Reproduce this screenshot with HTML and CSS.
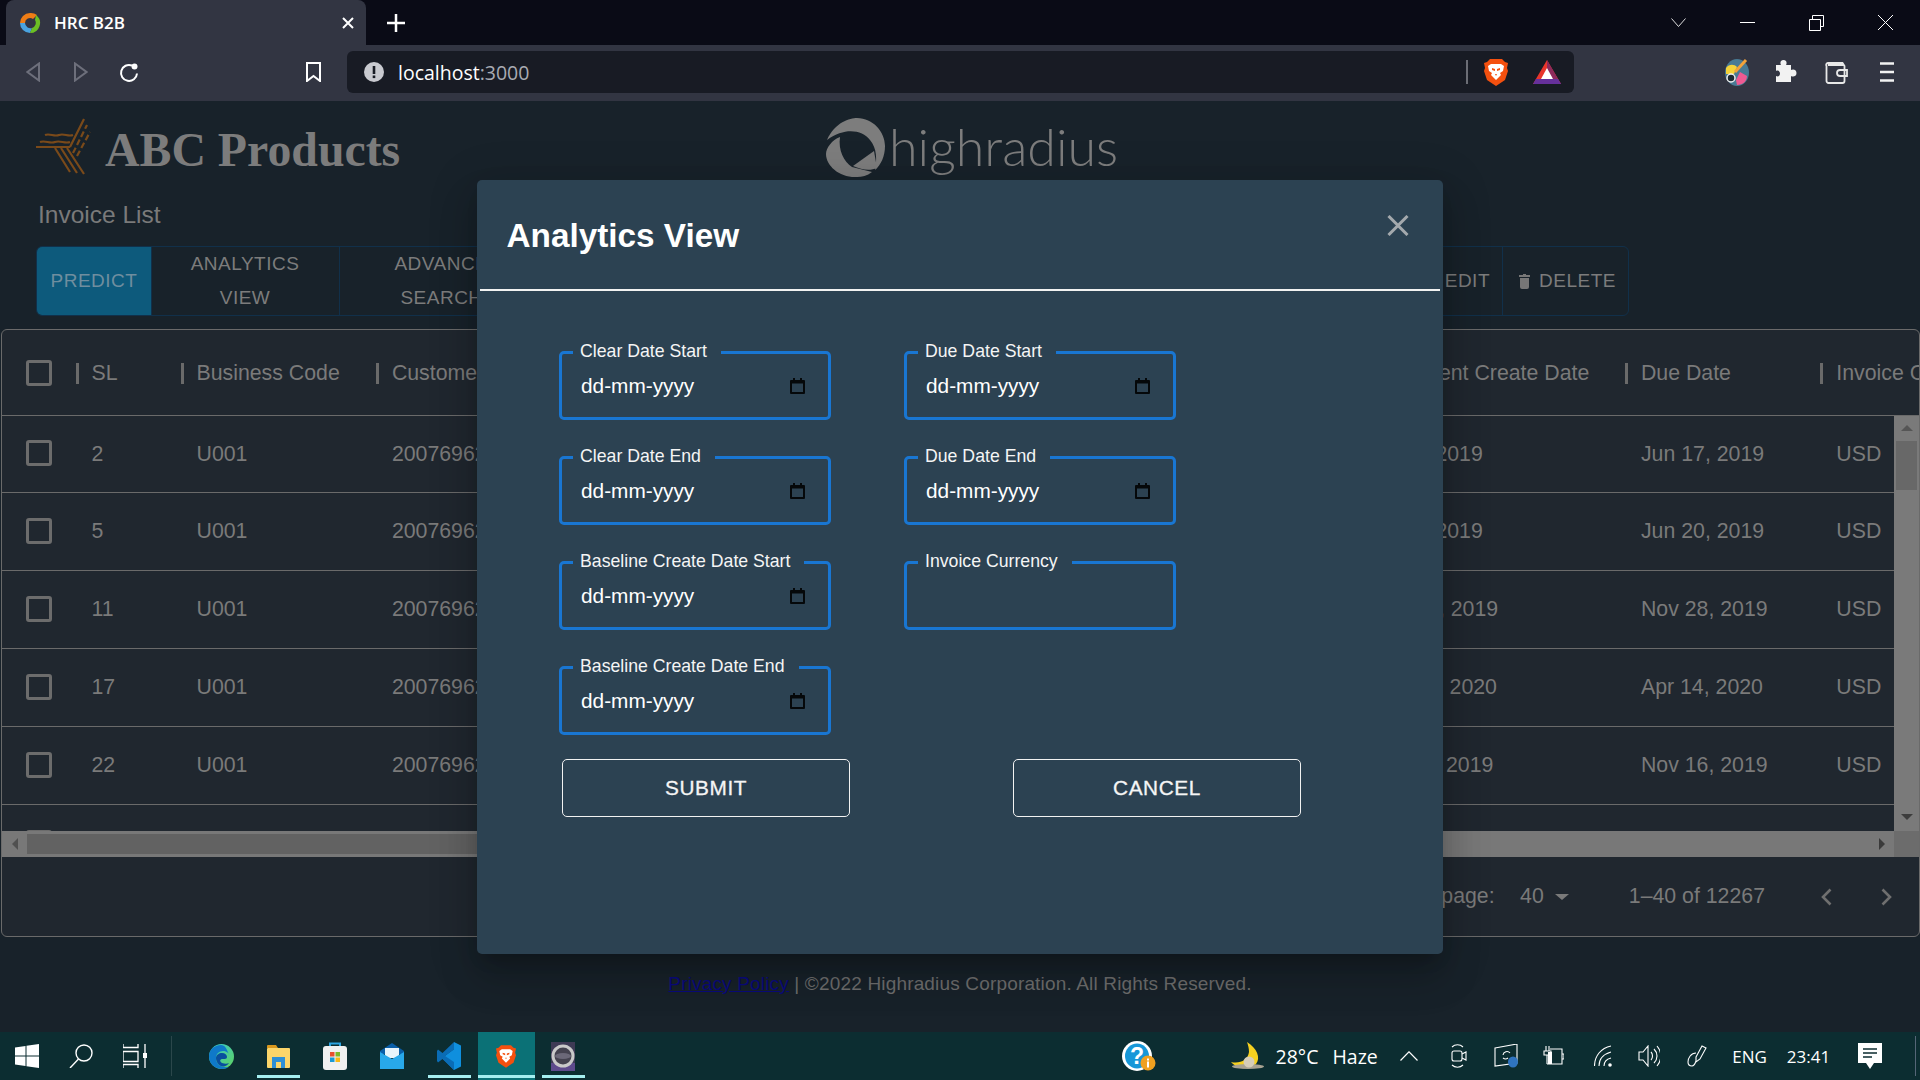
FILE: index.html
```html
<!DOCTYPE html>
<html>
<head>
    <title>HRC B2B</title>
    <link rel="stylesheet" href="styles.css">
</head>
<body>
    <svg class="defs" width="0" height="0">
        <symbol id="lion" viewBox="0 0 24 28">
            <path d="M6 1h12l3 3 3 1-1 5 1 3-3 9-9 6-9-6-3-9 1-3-1-5 3-1z" fill="#f4500f"/>
            <path d="M7 6h10l3 2-1 5-3 2 1 2-5 5-5-5 1-2-3-2-1-5z" fill="#fff"/>
            <path d="M8 10l3 1v2l-3-1zM16 10l-3 1v2l3-1zM11 16h2l-1 2z" fill="#f4500f"/>
        </symbol>
        <symbol id="calendar" viewBox="0 0 15 16">
            <path d="M3 0h2v2h5V0h2v2h2a1 1 0 0 1 1 1v12a1 1 0 0 1-1 1H1a1 1 0 0 1-1-1V3a1 1 0 0 1 1-1h2z" fill="#05080a"/>
            <rect x="2" y="5.500" width="11" height="8.500" fill="#2c4252"/>
        </symbol>
    </svg>

    <div class="tab-strip">
        <div class="tab">
            <svg class="favicon" viewBox="0 0 22 22">
                <path d="M11 1a10 10 0 0 0-10 10h5a5 5 0 0 1 8-4l4-4a10 10 0 0 0-7-2z" fill="#ef7d16"/>
                <path d="M1 11a10 10 0 0 0 10 10l2-5a5.500 5.500 0 0 1-7-5z" fill="#4aa3df"/>
                <path d="M17 3a10 10 0 0 1-6 18l2-5a5.500 5.500 0 0 0 3-8z" fill="#6cc024"/>
            </svg>
            <span class="tab-title">HRC B2B</span>
            <svg class="tab-close" viewBox="0 0 12 12"><path d="M1 1l10 10M11 1L1 11" stroke="#fff" stroke-width="2"/></svg>
        </div>
        <svg class="new-tab" viewBox="0 0 18 18"><path d="M9 0v18M0 9h18" stroke="#fff" stroke-width="2.500"/></svg>
        <div class="win-controls">
            <svg width="15" height="9" viewBox="0 0 15 9"><path d="M.5.500l7 8 7-8" fill="none" stroke="#ddd"/></svg>
            <svg width="15" height="1" viewBox="0 0 15 1"><path d="M0 .5h15" stroke="#fff"/></svg>
            <svg width="15" height="16" viewBox="0 0 15 16"><path d="M.5 4.500h11v11H.5zM3.500 4V.5h11v11H12" fill="none" stroke="#fff"/></svg>
            <svg width="15" height="15" viewBox="0 0 15 15"><path d="M0 0l15 15M15 0L0 15" stroke="#fff"/></svg>
        </div>
    </div>

    <div class="toolbar">
        <svg class="nav-back" width="14" height="20" viewBox="0 0 14 20"><path d="M13 1.500v17L1.500 10z" fill="none" stroke="#6d6f7b" stroke-width="2"/></svg>
        <svg class="nav-forward" width="14" height="20" viewBox="0 0 14 20"><path d="M1 1.500v17L12.500 10z" fill="none" stroke="#6d6f7b" stroke-width="2"/></svg>
        <svg class="nav-reload" width="21" height="21" viewBox="0 0 21 21"><path d="M14 3.500a8 8 0 1 0 5 8" fill="none" stroke="#fff" stroke-width="2"/><circle cx="16.500" cy="4.500" r="3" fill="#fff"/></svg>
        <svg class="nav-mark" width="15" height="20" viewBox="0 0 15 20"><path d="M1 1h13v18l-6.500-5L1 19z" fill="none" stroke="#fff" stroke-width="2"/></svg>
        <div class="address-bar">
            <svg width="20" height="20" viewBox="0 0 20 20"><circle cx="10" cy="10" r="10" fill="#c9cad0"/><rect x="8.700" y="4" width="2.600" height="8" fill="#181b24"/><rect x="8.700" y="13.500" width="2.600" height="2.600" fill="#181b24"/></svg>
            <span class="url"><b>localhost</b>:3000</span>
            <i class="address-sep"></i>
            <svg class="shield" width="24" height="28"><use href="#lion"/></svg>
            <svg class="bat" width="28" height="24" viewBox="0 0 28 24">
                <path d="M14 0L0 24h28z" fill="#e8352c"/>
                <path d="M14 0l14 24H14z" fill="#8d2a5c"/>
                <path d="M0 24l3-5h22l3 5z" fill="#66309b"/>
                <path d="M14 8l6 11H8z" fill="#fff"/>
            </svg>
        </div>
        <svg class="ext-paint" width="24" height="28" viewBox="0 0 24 28">
            <ellipse cx="12" cy="14.500" rx="12" ry="13.500" fill="#487a94"/>
            <path d="M1 10c3-4 8-4 11-1l-3 7-8 0z" fill="#f5d33a"/>
            <path d="M12 27c6 0 10-4 10-9l-7-4-4 8z" fill="#ef5a92"/>
            <path d="M10 14L21 2" stroke="#f2a33a" stroke-width="3"/>
            <circle cx="6" cy="20" r="4" fill="#1d2a33" stroke="#eee" stroke-width="1.500"/>
        </svg>
        <svg class="ext-puzzle" width="22" height="26" viewBox="0 0 22 26"><path d="M1 6h5c-1-1.500-1-5 2.500-5s3.500 3.500 2.500 5h5v5c1.500-1 5.500-1 5.500 3s-4 4-5.500 3v6H1v-6c2 1 4 0 4-2.500S3 11 1 12z" fill="#f2f2f2"/></svg>
        <svg class="ext-wallet" width="23" height="23" viewBox="0 0 23 23"><path d="M3 4h16M1.500 5a2 2 0 0 1 2-3h14l2 3v15a2 2 0 0 1-2 2h-14a2 2 0 0 1-2-2zM22 9h-7a3 3 0 0 0 0 6h7z" fill="none" stroke="#e8e8e8" stroke-width="1.800"/></svg>
        <svg class="ext-menu" width="14" height="20" viewBox="0 0 14 20"><path d="M0 1.500h14M0 10h14M0 18.500h14" stroke="#f2f2f2" stroke-width="2.500"/></svg>
    </div>

    <div class="page">
        <header class="brand-row">
            <div class="brand-abc">
                <svg width="80" height="70" viewBox="0 0 80 70" fill="none" stroke="#7a4a1a" stroke-width="2.200">
                    <path d="M11 37h34M45 37L59 9"/>
                    <path d="M20 25c5-2 9 2 14 0s9 2 14 0M15 32c5-2 10 2 15 0s10 2 15 0"/>
                    <path d="M48 43l14-28M52 46l13-24" stroke-dasharray="6 3"/>
                    <path d="M30 38l15 24M36 38l16 25M42 38l17 26"/>
                </svg>
                <span class="abc-name">ABC Products</span>
            </div>
            <div class="brand-hrc">
                <svg width="68" height="70" viewBox="11 0 68 70" fill="#7d7d7d">
                    <path d="M12 30C20 12 35 8 42 8c16 0 28 14 28 28 0 10-4 19-10 24 2-10 2-22-5-30C47 20 30 17 12 30z"/>
                    <path d="M25 27c-8 3-14 11-14 17 0 12 14 24 31 23 5 0 10-1 15-5l-20-5c-8-5-14-17-12-30z"/>
                    <path d="M59 41l3 17c-7 3-15 2-24-2z"/>
                </svg>
                <span class="hrc-name">highradius</span>
            </div>
        </header>

        <h2 class="list-title">Invoice List</h2>

        <div class="btn-group">
            <div class="group-item predict">PREDICT</div>
            <div class="group-item analytics">ANALYTICS VIEW</div>
            <div class="group-item advanced"><span>ADVANCED <span class="search-word">SEARCH</span></span></div>
            <div class="group-item add">ADD</div>
            <div class="group-item edit">EDIT</div>
            <div class="group-item delete">
                <svg width="11" height="15" viewBox="0 0 11 15"><path d="M4 0h3v1h4v2H0V1h4zM1 4h9v9a2 2 0 0 1-2 2H3a2 2 0 0 1-2-2z" fill="#777"/></svg>
                <span>DELETE</span>
            </div>
        </div>

        <div class="table-card">
            <div class="table-wrap">
                <table class="invoices">
                    <colgroup>
                        <col class="c-check"><col class="c-sl"><col class="c-std"><col class="c-std">
                        <col class="c-std"><col class="c-std"><col class="c-std"><col class="c-post">
                        <col class="c-wide"><col class="c-std"><col class="c-last">
                    </colgroup>
                    <thead>
                        <tr>
                            <th><i class="check"></i></th>
                            <th><div class="th-in"><i class="sep"></i>SL</div></th>
                            <th><div class="th-in"><i class="sep"></i>Business Code</div></th>
                            <th><div class="th-in"><i class="sep"></i>Customer Number</div></th>
                            <th><div class="th-in"><i class="sep"></i>Clear Date</div></th>
                            <th><div class="th-in"><i class="sep"></i>Business Year</div></th>
                            <th><div class="th-in"><i class="sep"></i>Document Id</div></th>
                            <th><div class="th-in"><i class="sep"></i>Posting Date</div></th>
                            <th><div class="th-in"><i class="sep"></i>Document Create Date</div></th>
                            <th><div class="th-in"><i class="sep"></i>Due Date</div></th>
                            <th><div class="th-in"><i class="sep"></i>Invoice Currency</div></th>
                        </tr>
                    </thead>
                    <tbody>
                        <tr><td><i class="check"></i></td><td>2</td><td>U001</td><td>200769623</td><td></td><td></td><td></td><td></td><td>Jun 3, 2019</td><td>Jun 17, 2019</td><td>USD</td></tr>
                        <tr><td><i class="check"></i></td><td>5</td><td>U001</td><td>200769623</td><td></td><td></td><td></td><td></td><td>Jun 6, 2019</td><td>Jun 20, 2019</td><td>USD</td></tr>
                        <tr><td><i class="check"></i></td><td>11</td><td>U001</td><td>200769623</td><td></td><td></td><td></td><td></td><td>Nov 13, 2019</td><td>Nov 28, 2019</td><td>USD</td></tr>
                        <tr><td><i class="check"></i></td><td>17</td><td>U001</td><td>200769623</td><td></td><td></td><td></td><td></td><td>Mar 30, 2020</td><td>Apr 14, 2020</td><td>USD</td></tr>
                        <tr><td><i class="check"></i></td><td>22</td><td>U001</td><td>200769623</td><td></td><td></td><td></td><td></td><td>Oct 31, 2019</td><td>Nov 16, 2019</td><td>USD</td></tr>
                        <tr><td><i class="check"></i></td><td></td><td></td><td></td><td></td><td></td><td></td><td></td><td></td><td></td><td></td></tr>
                    </tbody>
                </table>
                <div class="vbar">
                    <i class="arrow-up"></i>
                    <div class="vthumb"></div>
                    <i class="arrow-down"></i>
                </div>
            </div>
            <div class="hbar">
                <div class="hbtn"><i class="arrow-left"></i></div>
                <div class="hthumb"></div>
                <div class="hbtn hbtn-right"><i class="arrow-right"></i></div>
                <div class="hcorner"></div>
            </div>
            <div class="pager">
                <span>Rows per page:</span>
                <span class="per-page">40</span>
                <i class="caret"></i>
                <span class="range">1–40 of 12267</span>
                <svg class="prev" width="12" height="18" viewBox="0 0 12 18"><path d="M10.500 1.500L3 9l7.500 7.500" fill="none" stroke="#6f6f6f" stroke-width="2.600"/></svg>
                <svg class="next" width="12" height="18" viewBox="0 0 12 18"><path d="M1.500 1.500L9 9l-7.500 7.500" fill="none" stroke="#6f6f6f" stroke-width="2.600"/></svg>
            </div>
        </div>

        <footer class="page-footer"><a href="#">Privacy Policy</a> | ©2022 Highradius Corporation. All Rights Reserved.</footer>
    </div>

    <div class="taskbar">
        <div class="tb-sys">
            <svg width="24" height="24" viewBox="0 0 24 24" fill="#fff"><path d="M0 3.500l10.500-1.500v9.500H0zM11.500 1.800L24 0v11.500H11.500zM0 12.500h10.500V22L0 20.500zM11.500 12.500H24V24l-12.500-1.800z"/></svg>
        </div>
        <div class="tb-sys">
            <svg width="24" height="24" viewBox="0 0 24 24" fill="none" stroke="#fff" stroke-width="1.400"><circle cx="15" cy="9" r="8"/><path d="M9.500 15L1 24"/></svg>
        </div>
        <div class="tb-sys">
            <svg width="24" height="24" viewBox="0 0 24 24" fill="none" stroke="#fff" stroke-width="1.300"><path d="M0 3.500h15V0M0 3.500V0M0 7.500h15v10H0zM0 24v-3.500h15V24M22 0v24"/><rect x="20" y="9" width="4" height="5" fill="#fff" stroke="none"/></svg>
        </div>
        <div class="tb-divider"></div>
        <div class="tb-app">
            <svg width="25" height="25" viewBox="0 0 25 25">
                <defs><linearGradient id="edgeg" x1="0" y1="0" x2="1" y2="1"><stop offset="0" stop-color="#37c6d0"/><stop offset="1" stop-color="#5fd35f"/></linearGradient></defs>
                <circle cx="12.500" cy="12.500" r="12.500" fill="url(#edgeg)"/>
                <path d="M12 1C5 1 0 6 0 12.500 0 20 6 25 13 25c3 0 5-1 7-2-7 1-13-2-13-9 0-4 3-7 7-7 3 0 6 2 6 4-2-6-4-10-8-10z" fill="#0f79c9"/>
                <path d="M7 14c0-3 3-5 6-5s5 2 5 4c0 2-2 2-4 2-3 0-4 2-1 4 3 1 5 1 7 0-2 3-5 4-8 3-3-1-5-5-5-8z" fill="#094f9e"/>
            </svg>
        </div>
        <div class="tb-app running">
            <svg width="23" height="24" viewBox="0 0 23 24">
                <path d="M0 2a1 1 0 0 1 1-1h8l2 3h-11z" fill="#d9981e"/>
                <rect y="4" width="23" height="20" rx="1" fill="#fbd56a"/>
                <path d="M5 13h13v11h-4v-6H9v6H5z" fill="#2d8fd6"/>
            </svg>
        </div>
        <div class="tb-app">
            <svg width="24" height="28" viewBox="0 0 24 28">
                <path d="M7 6V1.500h10V6" fill="none" stroke="#2ca4e0" stroke-width="2"/>
                <rect y="4" width="24" height="24" rx="3" fill="#f1f1f1"/>
                <rect x="7" y="10" width="4.500" height="4.500" fill="#e8502e"/><rect x="12.500" y="10" width="4.500" height="4.500" fill="#7db928"/>
                <rect x="7" y="15.500" width="4.500" height="4.500" fill="#1a9ad6"/><rect x="12.500" y="15.500" width="4.500" height="4.500" fill="#f9b916"/>
            </svg>
        </div>
        <div class="tb-app">
            <svg width="24" height="26" viewBox="0 0 24 26">
                <path d="M12 0l12 8v3H0V8z" fill="#0a5ea8"/>
                <path d="M5 5h14v10H5z" fill="#e8f4fb"/>
                <path d="M0 9l12 7 12-7v17H0z" fill="#28a8ea"/>
            </svg>
        </div>
        <div class="tb-app running">
            <svg width="24" height="28" viewBox="0 0 24 28">
                <path d="M17 0l7 3.500v21L17 28 5 16l12-9z" fill="#0f8fde"/>
                <path d="M17 0L5.500 11 1 7.500 0 9v10l1 1.500L5.500 17 17 28V20L8 14l9-6.500z" fill="#0a6cb5"/>
            </svg>
        </div>
        <div class="tb-app active running">
            <svg width="20" height="24"><use href="#lion"/></svg>
        </div>
        <div class="tb-app running">
            <svg width="24" height="29" viewBox="0 0 24 29">
                <rect width="24" height="29" fill="#3e3a55"/>
                <rect y="21" width="24" height="8" fill="#5e4a8c"/>
                <circle cx="12" cy="14" r="11.500" fill="#c9c9c9"/>
                <circle cx="12" cy="14" r="8.500" fill="#44424f"/>
                <ellipse cx="12" cy="14" rx="8" ry="3" fill="#6b6878"/>
            </svg>
        </div>

        <svg class="tray-help" width="35" height="30" viewBox="0 0 35 30">
            <ellipse cx="16" cy="15" rx="15" ry="15" fill="#fff"/>
            <ellipse cx="16" cy="15" rx="12" ry="12.500" fill="#1697d8"/>
            <text x="16" y="23" text-anchor="middle" class="help-mark">?</text>
            <circle cx="27" cy="22" r="7.500" fill="#f0a020"/>
            <rect x="26" y="20.500" width="2" height="6" fill="#fff"/><rect x="26" y="17.500" width="2" height="2" fill="#fff"/>
        </svg>
        <svg class="tray-moon" width="34" height="28" viewBox="0 0 34 28">
            <path d="M17 0c10 6 14 16 9 22S8 28 1 20c9 2 17-2 18-10 0-4-1-7-2-10z" fill="#f5d020"/>
            <ellipse cx="18" cy="24.500" rx="16" ry="2.500" fill="#a8a292"/>
            <circle cx="19" cy="20" r="5.500" fill="#d6cdb8"/>
        </svg>
        <span class="tray-temp">28°C</span>
        <span class="tray-haze">Haze</span>
        <svg class="tray-up" width="18" height="10" viewBox="0 0 18 10"><path d="M.5 9.500L9 .8l8.500 8.700" fill="none" stroke="#fff" stroke-width="1.200"/></svg>
        <svg class="tray-meet" width="17" height="24" viewBox="0 0 17 24" fill="none" stroke="#fff" stroke-width="1.100"><path d="M2 3c3-3 8-3 11 0M2 21c3 3 8 3 11 0"/><rect x="2" y="7" width="10" height="10" rx="2"/><path d="M12 10l4-2v8l-4-2"/></svg>
        <svg class="tray-sync" width="24" height="24" viewBox="0 0 24 24" fill="none" stroke="#fff" stroke-width="1.100">
            <path d="M1 4L23 0v19L1 22zM9 11a4 4 0 0 1 7-2M14 14a4 4 0 0 1-5 0"/>
            <ellipse cx="19" cy="18" rx="5" ry="5.500" fill="#2f74c0" stroke="none"/>
        </svg>
        <svg class="tray-battery" width="23" height="20" viewBox="0 0 23 20" fill="none" stroke="#fff" stroke-width="1.100"><path d="M5 0v5M8 0v5M3 5h7v4H3zM6 9v9"/><path d="M9 3h12v15H6"/><path d="M21 8h2v5h-2"/><rect x="7" y="6" width="4" height="12" fill="#fff" stroke="none"/></svg>
        <svg class="tray-wifi" width="18" height="22" viewBox="0 0 18 22" fill="none" stroke="#fff" stroke-width="1.100"><path d="M.5 21C.5 11 7 3 17 1M5 21c0-7 5-12 12-14M10 21c0-4 3-7 7-8"/><circle cx="16" cy="20" r="1.800" fill="#fff" stroke="none"/></svg>
        <svg class="tray-volume" width="22" height="22" viewBox="0 0 22 22" fill="none" stroke="#fff" stroke-width="1.100"><path d="M1 7h4l5-6v20l-5-6H1zM13 7c2 2 2 6 0 8M16 4c4 4 4 10 0 14M19 1c5 6 5 14 0 20"/></svg>
        <svg class="tray-pen" width="20" height="22" viewBox="0 0 20 22" fill="none" stroke="#fff" stroke-width="1.100"><path d="M9 12L15 1l4 2-6 11-4 3zM9 8C4 8 1 13 1 17c0 3 2 4 4 4s3-2 4-5"/></svg>
        <span class="tray-lang">ENG</span>
        <span class="tray-clock">23:41</span>
        <svg class="tray-notify" width="24" height="26" viewBox="0 0 24 26"><path d="M0 0h24v20h-8l-4 6-4-6H0z" fill="#fff"/><path d="M5 6h14M5 10h14M5 14h9" stroke="#0c2d31" stroke-width="1.300"/></svg>
        <i class="tray-edge"></i>
    </div>

    <div class="dialog">
        <div class="dialog-head">
            <h1>Analytics View</h1>
            <svg width="22" height="21" viewBox="0 0 22 21"><path d="M1.500 1L20.500 20M20.500 1L1.500 20" stroke="#a4a9ad" stroke-width="3"/></svg>
        </div>
        <div class="dialog-body">
            <div class="field-grid">
                <fieldset class="field"><legend>Clear Date Start</legend><div class="field-value">dd-mm-yyyy<svg width="15" height="16"><use href="#calendar"/></svg></div></fieldset>
                <fieldset class="field"><legend>Due Date Start</legend><div class="field-value">dd-mm-yyyy<svg width="15" height="16"><use href="#calendar"/></svg></div></fieldset>
                <fieldset class="field"><legend>Clear Date End</legend><div class="field-value">dd-mm-yyyy<svg width="15" height="16"><use href="#calendar"/></svg></div></fieldset>
                <fieldset class="field"><legend>Due Date End</legend><div class="field-value">dd-mm-yyyy<svg width="15" height="16"><use href="#calendar"/></svg></div></fieldset>
                <fieldset class="field"><legend>Baseline Create Date Start</legend><div class="field-value">dd-mm-yyyy<svg width="15" height="16"><use href="#calendar"/></svg></div></fieldset>
                <fieldset class="field"><legend>Invoice Currency</legend><div class="field-value"></div></fieldset>
                <fieldset class="field"><legend>Baseline Create Date End</legend><div class="field-value">dd-mm-yyyy<svg width="15" height="16"><use href="#calendar"/></svg></div></fieldset>
            </div>
            <div class="dialog-actions">
                <button>SUBMIT</button>
                <button>CANCEL</button>
            </div>
        </div>
    </div>
</body>
</html>
```

FILE: styles.css
```css
* { box-sizing: border-box; }
html, body { margin: 0; height: 100%; }
body {
    width: 1920px;
    height: 1080px;
    overflow: hidden;
    position: relative;
    display: flex;
    flex-direction: column;
    font-family: "Liberation Sans", Arial, sans-serif;
    background: #18222a;
}
.defs { position: absolute; }

/* browser chrome */
.tab-strip {
    height: 45px;
    flex: none;
    display: flex;
    align-items: center;
    background: #0a0b16;
    padding-left: 6px;
}
.tab {
    width: 360px;
    height: 45px;
    display: flex;
    align-items: center;
    background: #323542;
    border-radius: 8px 8px 0 0;
    padding-left: 13px;
}
.favicon { width: 22px; height: 22px; }
.tab-title {
    font-family: "Open Sans", sans-serif;
    font-weight: 600;
    font-size: 17px;
    color: #fff;
    margin-left: 13px;
}
.tab-close { width: 12px; height: 12px; margin-left: auto; margin-right: 12px; }
.new-tab { width: 18px; height: 18px; margin-left: 21px; }
.win-controls {
    margin-left: auto;
    display: flex;
    align-items: center;
    padding-right: 27px;
    gap: 54px;
}
.toolbar {
    height: 56px;
    flex: none;
    display: flex;
    align-items: center;
    background: #323542;
    padding-bottom: 2px;
}
.nav-back { margin-left: 26px; }
.nav-forward { margin-left: 34px; }
.nav-reload { margin-left: 30px; }
.nav-mark { margin-left: 167px; }
.address-bar {
    width: 1227px;
    height: 42px;
    margin-left: 26px;
    display: flex;
    align-items: center;
    background: #181b24;
    border-radius: 6px;
    padding-left: 17px;
}
.url {
    font-family: "Open Sans", sans-serif;
    font-size: 19.500px;
    color: #a9abb3;
    margin-left: 14px;
}
.url b { font-weight: 400; color: #fff; }
.address-sep { width: 2px; height: 24px; background: #6b6d75; margin-left: 937px; }
.shield { margin-left: 16px; }
.bat { margin-left: 25px; }
.ext-paint { margin-left: 151px; }
.ext-puzzle { margin-left: 26px; }
.ext-wallet { margin-left: 28px; }
.ext-menu { margin-left: 32px; }

/* page behind the dialog */
.page {
    height: 931px;
    flex: none;
    overflow: hidden;
}
.brand-row {
    height: 94px;
    display: flex;
    align-items: flex-start;
}
.brand-abc {
    width: 822px;
    padding: 9px 0 0 25px;
    display: flex;
    align-items: flex-start;
}
.abc-name {
    font-family: "Liberation Serif", serif;
    font-weight: bold;
    font-size: 47.800px;
    line-height: 62px;
    color: #7c7c7c;
    padding-top: 9px;
}
.brand-hrc {
    padding-top: 9px;
    margin-left: 4px;
    display: flex;
    align-items: flex-start;
}
.hrc-name {
    font-family: Lato, sans-serif;
    font-weight: 300;
    font-size: 52px;
    line-height: 62px;
    color: #7d7d7d;
    margin-left: -5px;
    padding-top: 5px;
}
.list-title {
    margin: 0 0 11px 38px;
    font-weight: normal;
    font-size: 24.500px;
    line-height: 40px;
    color: #7a7a7a;
}
.btn-group {
    margin-left: 36px;
    width: 1593px;
    height: 70px;
    display: flex;
    border: 1px solid #11304a;
    border-radius: 6px;
}
.group-item {
    display: flex;
    align-items: center;
    justify-content: center;
    text-align: center;
    font-size: 19px;
    line-height: 33.250px;
    letter-spacing: 0.5px;
    color: #7c7c7c;
    border-right: 1px solid #11304a;
}
.predict { width: 115px; background: #0d5a7c; color: #6f8e9f; border-radius: 5px 0 0 5px; }
.analytics { width: 188px; padding: 0 31px 1px 30px; }
.advanced { width: 218px; padding: 0 40px 1px; }
.search-word { display: inline-block; margin-right: 14px; }
.add { flex: 1; }
.edit { width: 101px; justify-content: flex-end; padding-right: 12px; }
.delete { width: 125px; border-right: 0; justify-content: flex-start; padding-left: 16px; gap: 9px; }

/* table */
.table-card {
    margin: 13px 0 0 1px;
    width: 1919px;
    height: 608px;
    display: flex;
    flex-direction: column;
    background: #20272f;
    border: 1px solid #6a6a6a;
    border-radius: 6px;
    overflow: hidden;
}
.table-wrap {
    position: relative;
    height: 501px;
    flex: none;
    overflow: hidden;
}
.invoices {
    table-layout: fixed;
    width: 2018px;
    border-collapse: separate;
    border-spacing: 0;
    font-size: 21.300px;
    color: #7a7a7a;
}
.c-check { width: 73.500px; }
.c-sl { width: 105px; }
.c-std { width: 195.400px; }
.c-post { width: 198px; }
.c-wide { width: 269.500px; }
.c-last { width: 200px; }
.invoices th {
    height: 86px;
    padding: 0;
    font-weight: normal;
    text-align: left;
    white-space: nowrap;
    overflow: hidden;
    border-bottom: 1px solid #6a6a6a;
}
.th-in { display: flex; align-items: center; padding-top: 2px; }
.sep { width: 3px; height: 21px; background: #6a6a6a; margin-right: 13px; flex: none; }
.invoices td {
    height: 78px;
    padding: 0 0 0 16px;
    white-space: nowrap;
    overflow: hidden;
    border-bottom: 1px solid #6a6a6a;
}
.invoices tbody tr:first-child td { height: 77px; }
.invoices td:first-child { padding: 0 0 2px; }
.check {
    display: block;
    width: 26px;
    height: 26px;
    margin-left: 24px;
    border: 3px solid #6c6c6c;
    border-radius: 3px;
}
.vbar {
    position: absolute;
    top: 86px;
    right: 0;
    bottom: 0;
    width: 25px;
    background: #7a7a7a;
    display: flex;
    flex-direction: column;
    align-items: center;
}
.arrow-up {
    margin-top: 9px;
    border: 6px solid transparent;
    border-top: 0;
    border-bottom: 6px solid #565656;
}
.vthumb { width: 21px; height: 49px; margin-top: 10px; background: #686868; }
.arrow-down {
    margin-top: auto;
    margin-bottom: 11px;
    border: 6px solid transparent;
    border-bottom: 0;
    border-top: 6px solid #3d3d3d;
}
.hbar {
    height: 26px;
    flex: none;
    display: flex;
    background: #787878;
}
.hbtn {
    width: 25px;
    flex: none;
    display: flex;
    align-items: center;
    justify-content: center;
}
.hbtn-right { margin-left: auto; }
.hthumb { width: 1380px; margin: 3px 0; background: #626262; }
.hcorner { width: 25px; background: #6c6c6c; }
.arrow-left { border: 6px solid transparent; border-left: 0; border-right: 6px solid #505050; }
.arrow-right { border: 6px solid transparent; border-right: 0; border-left: 6px solid #3a3a3a; margin-left: 1px; }
.pager {
    height: 79px;
    flex: none;
    display: flex;
    align-items: center;
    justify-content: flex-end;
    font-size: 21.300px;
    color: #7a7a7a;
    padding-right: 26px;
    white-space: nowrap;
}
.per-page { margin-left: 25.500px; }
.caret {
    margin-left: 11px;
    border: 7px solid transparent;
    border-bottom: 0;
    border-top: 6px solid #7a7a7a;
}
.range { margin-left: 60px; }
.prev { margin-left: 55px; }
.next { margin-left: 49px; }
.page-footer {
    margin-top: 36px;
    text-align: center;
    font-size: 19px;
    line-height: 22px;
    letter-spacing: 0.165px;
    color: #6f6f6f;
}
.page-footer a { color: #0a0a7e; }

/* taskbar */
.taskbar {
    height: 48px;
    flex: none;
    display: flex;
    align-items: center;
    background: #0c2d31;
    color: #fff;
    font-family: "Open Sans", sans-serif;
}
.tb-sys {
    width: 54px;
    height: 48px;
    display: flex;
    align-items: center;
    justify-content: center;
}
.tb-divider {
    width: 30.500px;
    height: 40px;
    margin-left: 9px;
    margin-right: -9px;
    border-left: 1px solid #2b474b;
}
.tb-app {
    width: 57px;
    height: 48px;
    display: flex;
    align-items: center;
    justify-content: center;
}
.tb-app.running { background: linear-gradient(#a5eef0, #a5eef0) center bottom 2px / 43px 3px no-repeat; }
.tb-app.active.running { background: linear-gradient(#a5eef0, #a5eef0) center bottom 2px / 100% 3px no-repeat, #0b7176; }
.help-mark { font-family: "Liberation Sans", sans-serif; font-weight: bold; font-size: 23px; fill: #fff; }
.tray-help { margin-left: 529px; }
.tray-moon { margin-left: 74px; }
.tray-temp { margin-left: 12px; font-size: 19.500px; }
.tray-haze { margin-left: 14px; font-size: 19.500px; }
.tray-up { margin-left: 22px; }
.tray-meet { margin-left: 32.500px; }
.tray-sync { margin-left: 27px; }
.tray-battery { margin-left: 23px; }
.tray-wifi { margin-left: 30px; }
.tray-volume { margin-left: 26px; }
.tray-pen { margin-left: 27px; }
.tray-lang { margin-left: 25px; font-size: 17px; }
.tray-clock { margin-left: 20px; font-size: 17px; }
.tray-notify { margin-left: 28px; }
.tray-edge { width: 1px; height: 40px; background: #567; margin-left: 33px; }

/* dialog */
.dialog {
    position: absolute;
    left: 477px;
    top: 180px;
    width: 966px;
    height: 774px;
    background: #2c4252;
    border-radius: 5px;
    box-shadow: 0 11px 15px -7px rgba(0,0,0,0.2), 0 24px 38px 3px rgba(0,0,0,0.14), 0 9px 46px 8px rgba(0,0,0,0.12);
    color: #fff;
}
.dialog-head {
    height: 111px;
    margin: 0 3px;
    padding: 35px 31px 0 26.500px;
    display: flex;
    justify-content: space-between;
    align-items: flex-start;
    border-bottom: 2px solid #f2f2f2;
}
.dialog-head h1 {
    margin: 0;
    font-size: 33.300px;
    line-height: 41px;
}
.dialog-body { padding: 51px 0 0 82px; }
.field-grid {
    display: grid;
    grid-template-columns: 272px 272px;
    grid-auto-rows: 78px;
    column-gap: 73px;
    row-gap: 27px;
}
.field {
    margin: 0;
    padding: 0;
    min-width: 0;
    height: 78px;
    border: 3px solid #1976d2;
    border-radius: 5px;
}
.field legend {
    margin-left: 11px;
    padding: 0 14px 2px 7px;
    font-size: 17.700px;
    line-height: 18px;
    color: #f5f5f5;
    white-space: nowrap;
}
.field-value {
    height: 48px;
    padding: 0 23px 0 19px;
    display: flex;
    align-items: center;
    justify-content: space-between;
    font-size: 20.800px;
    color: #fff;
}
.field-value svg { margin-bottom: 1px; }
.dialog-actions {
    margin: 24px 0 0 3px;
    display: flex;
    gap: 163px;
}
.dialog-actions button {
    width: 288px;
    height: 58px;
    background: transparent;
    border: 1px solid #f2f2f2;
    border-radius: 5px;
    font-family: "Liberation Sans", Arial, sans-serif;
    font-size: 20.800px;
    letter-spacing: 0.600px;
    color: #f5f5f5;
    -webkit-text-stroke: 0.3px #f5f5f5;
}
```
